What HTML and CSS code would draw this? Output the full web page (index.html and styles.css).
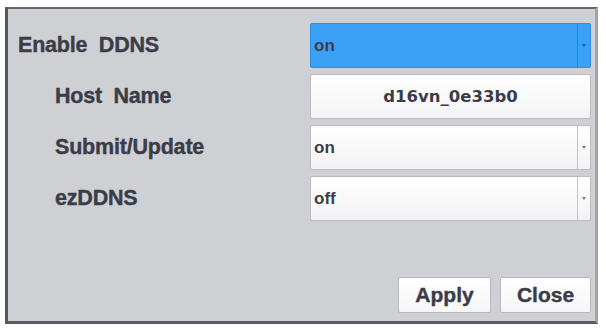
FILE: index.html
```html
<!DOCTYPE html>
<html>
<head>
<meta charset="utf-8">
<link rel="stylesheet" href="styles.css">
</head>
<body>
<div class="dialog">
  <div class="form">
    <div class="label">Enable&nbsp; DDNS</div>
    <div class="field select selected"><span class="val">on</span><span class="arrow"><span class="tri"></span></span></div>
    <div class="label sub">Host&nbsp; Name</div>
    <div class="field text"><span class="host">d16vn_0e33b0</span></div>
    <div class="label sub">Submit/Update</div>
    <div class="field select"><span class="val">on</span><span class="arrow"><span class="tri"></span></span></div>
    <div class="label sub">ezDDNS</div>
    <div class="field select"><span class="val">off</span><span class="arrow"><span class="tri"></span></span></div>
  </div>
  <div class="buttons">
    <button class="btn apply">Apply</button>
    <button class="btn close">Close</button>
  </div>
</div>
</body>
</html>
```
FILE: styles.css
```css
html, body {
  margin: 0;
  padding: 0;
  background: #ffffff;
}
body {
  width: 606px;
  height: 329px;
  overflow: hidden;
}
.dialog {
  box-sizing: border-box;
  margin: 7px 0 0 5px;
  width: 593px;
  height: 317px;
  background: #cfd0d4;
  border-top: 2px solid #66666e;
  border-left: 3px solid #55555d;
  border-bottom: 3px solid #5a5a62;
  border-right: 3px solid #a4a4a8;
  padding: 14px 4px 8px 10px;
  display: flex;
  flex-direction: column;
  font-family: "Liberation Sans", Arial, sans-serif;
  color: #3a3d48;
}
.form {
  display: grid;
  grid-template-columns: 1fr 281px;
  grid-auto-rows: 45px;
  row-gap: 6px;
}
.label {
  display: flex;
  align-items: center;
  font-weight: bold;
  font-size: 21.5px;
  letter-spacing: -0.2px;
  -webkit-text-stroke: 0.4px #3a3d48;
}
.label.sub {
  padding-left: 37px;
}
.field {
  box-sizing: border-box;
  border: 1px solid #bcbcc0;
  border-radius: 2px;
  background: linear-gradient(#ffffff, #f3f3f5);
  display: flex;
  align-items: center;
}
.select .val {
  flex: 1;
  padding-left: 3px;
  font-size: 17px;
  font-weight: bold;
  color: #3a3d48;
}
.select .arrow {
  width: 12px;
  align-self: stretch;
  border-left: 1px solid #c4c4c8;
  display: flex;
  align-items: center;
  justify-content: center;
}
.tri {
  width: 0;
  height: 0;
  border-left: 2px solid transparent;
  border-right: 2px solid transparent;
  border-top: 3px solid #77777d;
}
.selected {
  background: #3aa1f6;
  border-color: #2f8ee0;
}
.selected .arrow {
  border-left-color: #2a84d6;
}
.selected .tri {
  border-top-color: #1f5f9e;
}
.text {
  justify-content: center;
}
.host {
  font-family: "DejaVu Sans", Verdana, sans-serif;
  font-weight: bold;
  font-size: 16.5px;
  color: #3a3d48;
}
.buttons {
  margin-top: auto;
  display: flex;
  justify-content: flex-end;
  gap: 9px;
}
.btn {
  box-sizing: border-box;
  height: 36px;
  background: linear-gradient(#ffffff, #f6f6f7);
  border: 1px solid #b8b8bc;
  border-radius: 2px;
  font-family: "Liberation Sans", Arial, sans-serif;
  font-weight: bold;
  font-size: 21px;
  color: #3a3d48;
  -webkit-text-stroke: 0.4px #3a3d48;
  padding: 0;
}
.apply {
  width: 93px;
}
.close {
  width: 91px;
}
```
